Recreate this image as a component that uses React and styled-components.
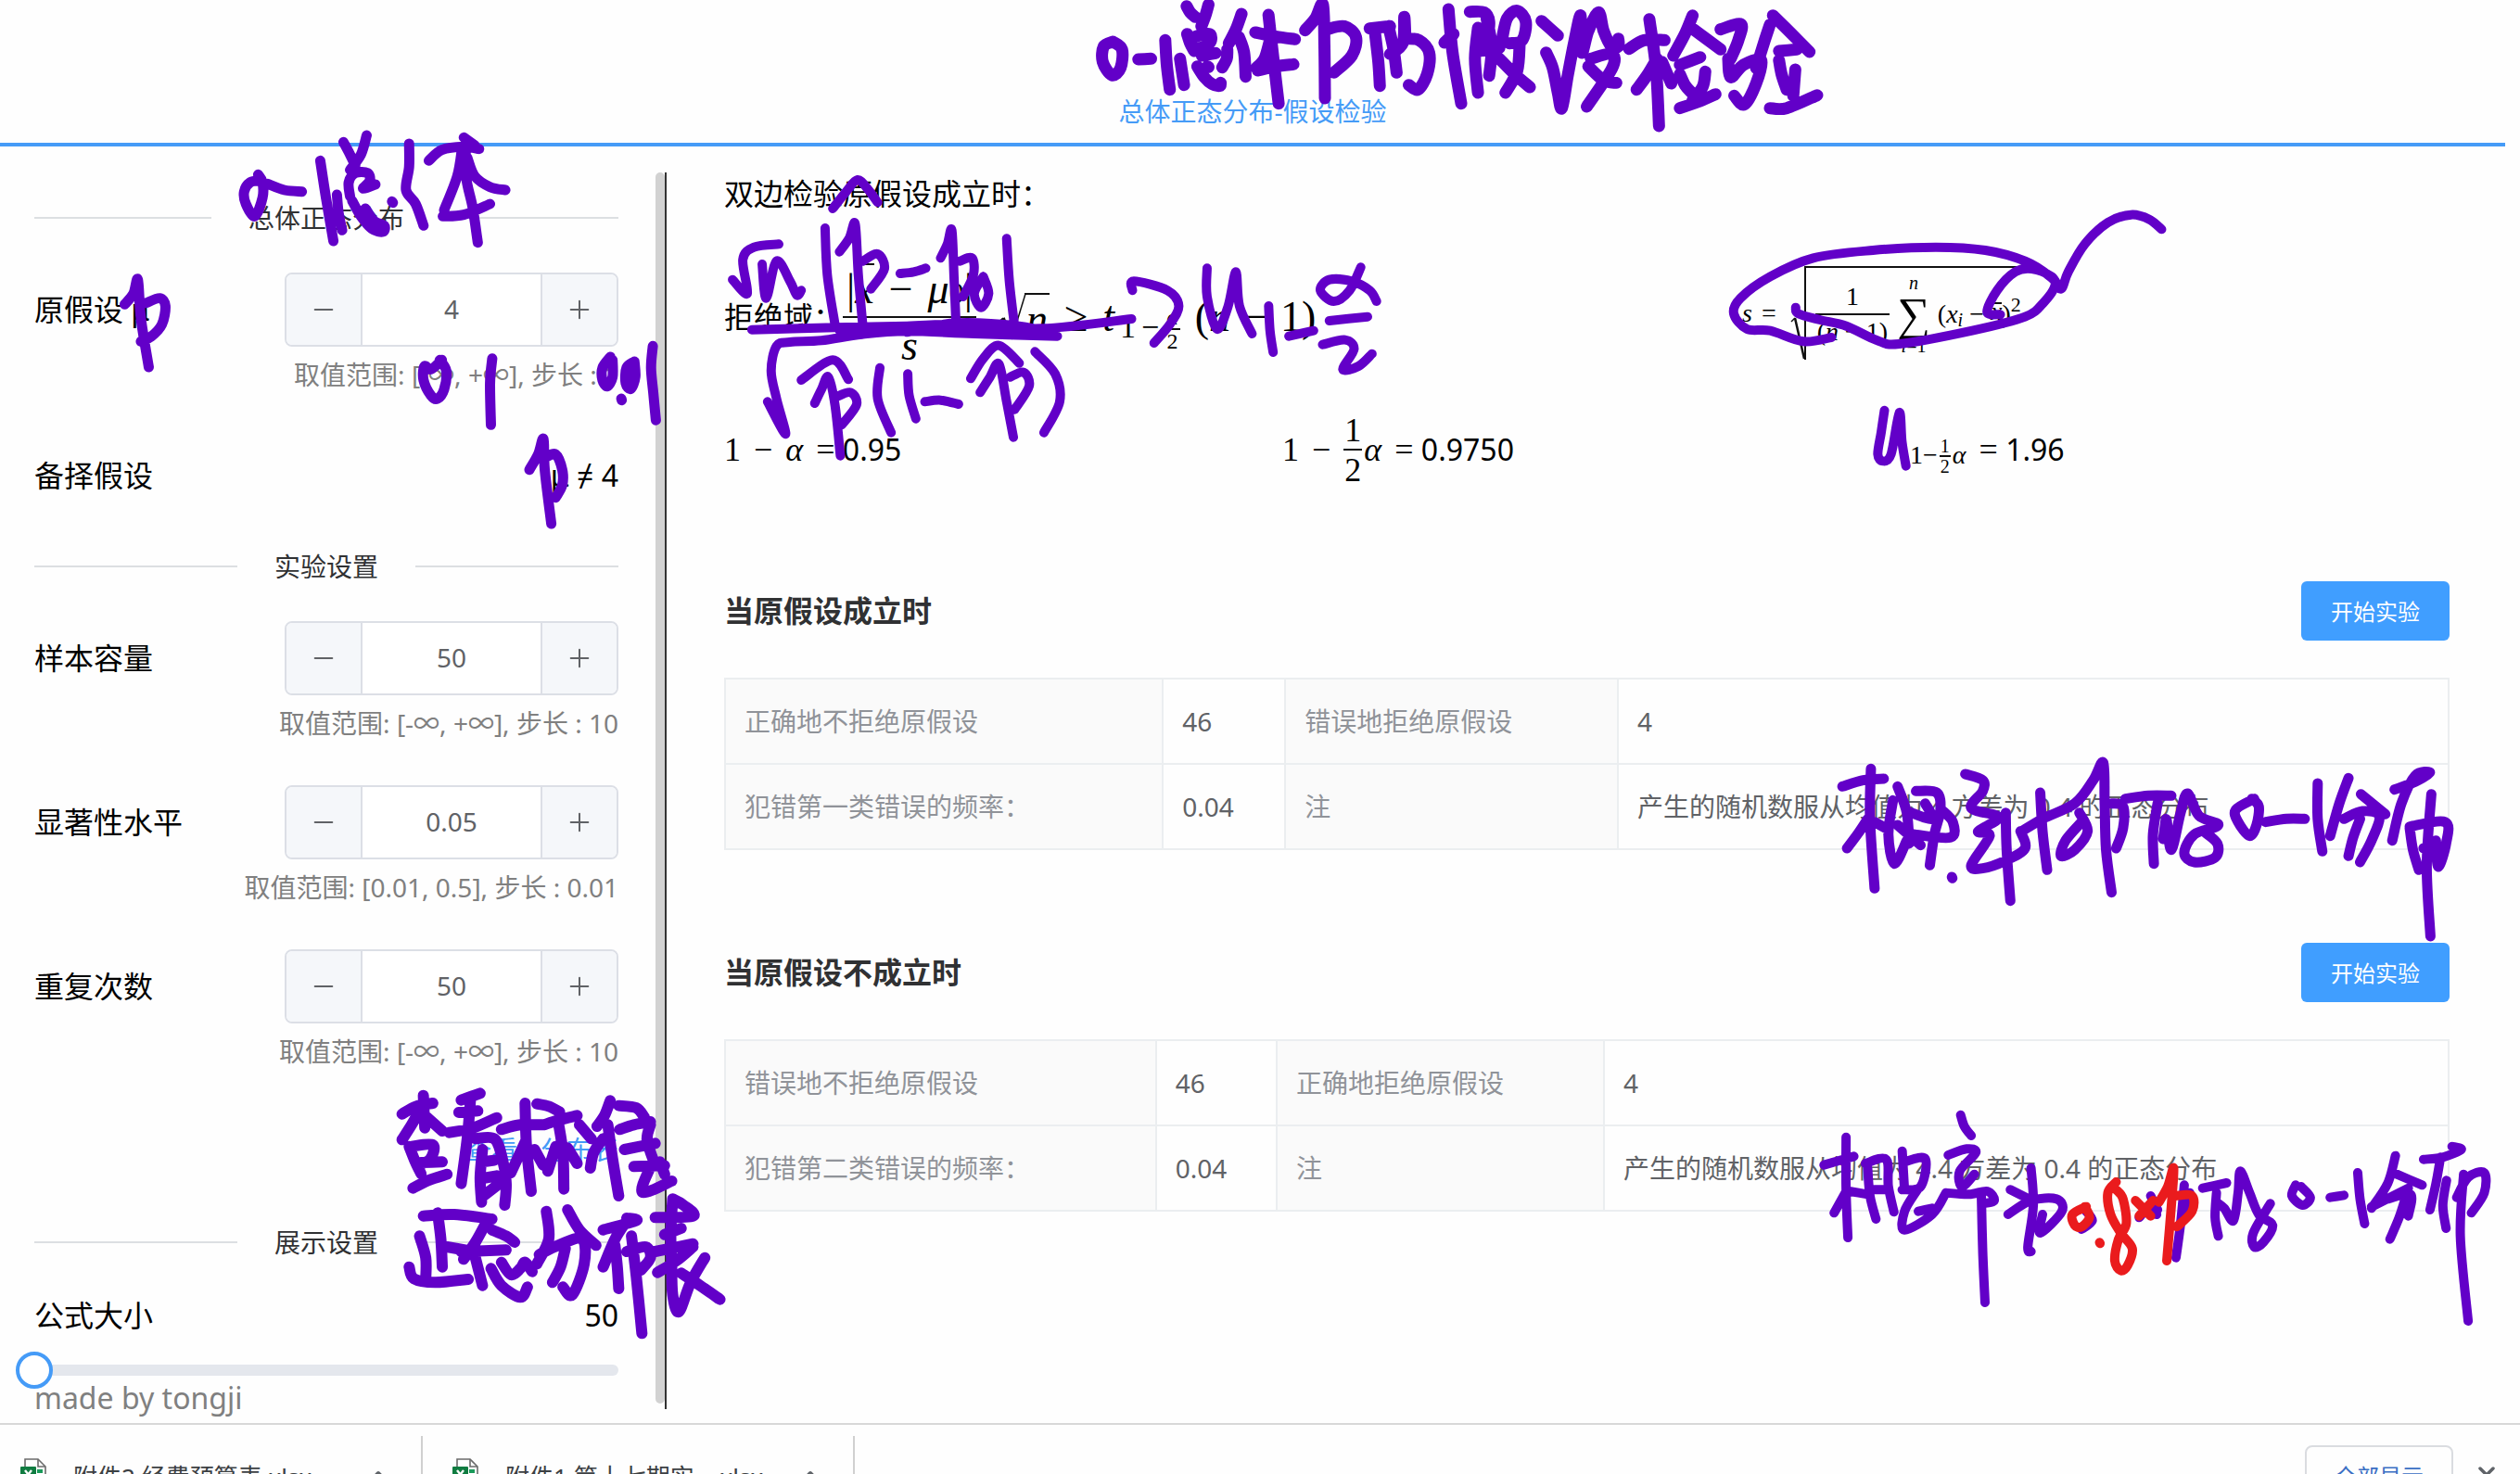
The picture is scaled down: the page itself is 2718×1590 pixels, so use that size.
import React, { useState } from "react";
import styled, { createGlobalStyle } from "styled-components";
import { Minus, Plus, ChevronUp, X } from "lucide-react";

const GlobalStyle = createGlobalStyle`
  * { box-sizing: border-box; }
  html, body { margin: 0; height: 100%; overflow: hidden; background: #fefefe; }
  body, button, input { font-family: "Noto Sans", "Noto Sans CJK SC", sans-serif; }
`;

const Shell = styled.div`
  position: relative;
  height: 100vh;
  overflow: hidden;
  color: #000;
  font-size: 32px;
  line-height: 40px;
`;

const Page = styled.div`
  margin-right: 16px;
`;

const Header = styled.header`
  display: flex;
  justify-content: center;
  padding: 100px 0 14px;
  border-bottom: 4px solid #459bf7;
  color: #459bf7;
  font-size: 28px;
`;

const PageTitle = styled.h1`
  margin: 0;
  font: inherit;
`;

const Body = styled.div`
  display: flex;
  align-items: flex-start;
  margin-top: 28px;
`;

/* ---------- settings column ---------- */

const Sidebar = styled.aside`
  display: flex;
  flex: none;
  gap: 40px;
  width: 719px;
  padding-left: 37px;
  border-right: 2px solid #333;
`;

const Settings = styled.form`
  flex: 1;
  display: flex;
  flex-direction: column;
  padding-top: 28px;
`;

const ScrollThumb = styled.div`
  width: 10px;
  margin-bottom: 6px;
  border-radius: 5px;
  background: #d2d2d2;
`;

const Divider = styled.h2`
  display: flex;
  align-items: center;
  gap: 40px;
  margin: 0 0 38px;
  font-size: 28px;
  line-height: 42px;
  font-weight: 400;
  color: #303133;
  &::before,
  &::after {
    content: "";
    flex: 1;
    height: 2px;
    background: #dcdfe2;
  }
`;

const Field = styled.div`
  display: flex;
  flex-direction: column;
  gap: 10px;
  margin-bottom: ${(p) => p.$after}px;
`;

const FieldRow = styled.div`
  display: flex;
  align-items: center;
  justify-content: space-between;
`;

const Stepper = styled.div`
  display: flex;
  width: 360px;
  height: 80px;
  overflow: hidden;
  border: 2px solid #dcdfe6;
  border-radius: 8px;
  background: #fff;
`;

const StepButton = styled.button`
  display: flex;
  align-items: center;
  justify-content: center;
  width: 80px;
  padding: 0;
  border: 0;
  background: #f5f7fa;
  color: #606266;
`;

const StepInput = styled.input`
  flex: 1;
  min-width: 0;
  padding: 0 0 2px;
  border: 0;
  border-left: 2px solid #dcdfe6;
  border-right: 2px solid #dcdfe6;
  background: #fff;
  color: #606266;
  font-size: 28px;
  text-align: center;
  outline: 0;
`;

const Hint = styled.div`
  font-size: 28px;
  color: #808080;
  text-align: right;
`;

const Summary = styled.div`
  display: flex;
  justify-content: space-between;
  margin-bottom: ${(p) => p.$after}px;
`;

const TableLink = styled.a`
  align-self: flex-end;
  margin-bottom: 59px;
  color: #459bf7;
  font-size: 28px;
  text-decoration: none;
`;

const SliderTrack = styled.div`
  display: flex;
  align-items: center;
  height: 12px;
  margin: 13px 0 12px;
  border-radius: 6px;
  background: #e4e7ed;
`;

const Slider = styled.input`
  appearance: none;
  flex: 1;
  height: 40px;
  margin: 0 -20px;
  background: transparent;
  &::-webkit-slider-thumb {
    appearance: none;
    width: 40px;
    height: 40px;
    border: 4px solid #459bf7;
    border-radius: 50%;
    background: #fff;
  }
`;

const Credit = styled.div`
  line-height: 24px;
  color: #808080;
`;

/* ---------- result column ---------- */

const Results = styled.main`
  flex: 1;
  min-width: 0;
  padding: 3px 60px 0 62px;
`;

const Lead = styled.p`
  margin: 0;
`;

const RuleRow = styled.div`
  display: grid;
  grid-template-columns: 1098fr 763fr;
  align-items: center;
  height: 120px;
  margin-top: 53px;
`;

const ValueRow = styled.div`
  display: grid;
  grid-template-columns: 602fr 677fr 582fr;
  align-items: center;
  height: 84px;
  margin-top: 41px;
`;

const Formula = styled.div`
  display: flex;
  align-items: center;
  white-space: nowrap;
  padding-bottom: ${(p) => p.$lift || 0}px;
`;

const MathText = styled.span`
  display: inline-flex;
  align-items: center;
  gap: ${(p) => p.$gap || 0}px;
  font-family: "Liberation Serif", serif;
  font-size: ${(p) => p.$size || 36}px;
  line-height: 1;
`;

const Fraction = styled.span`
  display: inline-grid;
  grid-template-rows: 1fr 2px 1fr;
  justify-items: center;
  align-items: center;
  height: ${(p) => p.$height}px;
  padding: 0 ${(p) => p.$pad || 0}px;
  &::before {
    content: "";
    grid-row: 2;
    grid-column: 1;
    justify-self: stretch;
    height: 2px;
    margin: 0 -${(p) => p.$pad || 0}px;
    background: #111;
  }
`;

const Over = styled.span`
  grid-row: 1;
  grid-column: 1;
  display: inline-flex;
  align-items: center;
`;

const Under = styled.span`
  grid-row: 3;
  grid-column: 1;
`;

const Bar = styled.i`
  border-top: 2px solid #111;
  line-height: 0.6;
  padding-bottom: 8px;
`;

const Lower = styled.span`
  display: inline-flex;
  align-items: center;
  gap: ${(p) => p.$gap || 2}px;
  padding-top: ${(p) => p.$drop}px;
  font-size: ${(p) => p.$size}px;
`;

const Raise = styled.span`
  padding-bottom: 20px;
  font-size: 22px;
`;

const Radical = styled.svg`
  flex: none;
  margin-right: -2px;
`;

const Radicand = styled.span`
  display: inline-flex;
  align-items: center;
  height: ${(p) => p.$height}px;
  padding: ${(p) => p.$pad || "0"};
  border-top: 2px solid #111;
`;

const SumStack = styled.span`
  display: inline-flex;
  flex-direction: column;
  align-items: center;
  font-size: 20px;
`;

const Sigma = styled.span`
  font-size: 50px;
  line-height: 48px;
`;

const Section = styled.section`
  margin-top: 100px;
`;

const SectionHead = styled.div`
  display: flex;
  align-items: center;
  justify-content: space-between;
  margin-bottom: 40px;
`;

const SectionTitle = styled.h2`
  margin: 0;
  font-size: 32px;
  font-weight: 700;
  color: #303133;
`;

const RunButton = styled.button`
  width: 160px;
  height: 64px;
  padding: 0 0 2px;
  border: 0;
  border-radius: 6px;
  background: #409eff;
  color: #fff;
  font-size: 24px;
`;

const DataTable = styled.table`
  width: 100%;
  table-layout: fixed;
  border-collapse: collapse;
  font-size: 28px;
  th,
  td {
    height: 92px;
    padding: 0 20px;
    border: 2px solid #ebeef0;
    font-weight: 400;
    text-align: left;
    white-space: nowrap;
  }
  th {
    background: #fafafa;
    color: #909399;
  }
  td {
    color: #606266;
  }
`;

const Column = styled.col`
  width: ${(p) => p.$width};
`;

/* ---------- downloads ---------- */

const Downloads = styled.footer`
  display: flex;
  align-items: flex-start;
  margin-top: 15px;
  padding-top: 12px;
  border-top: 2px solid #d8d8d8;
  font-size: 26px;
`;

const DownloadItem = styled.div`
  display: flex;
  align-items: flex-start;
  width: ${(p) => p.$width}px;
  height: 88px;
  padding: 24px 32px 0 ${(p) => p.$inset}px;
  border-right: 2px solid #d0d0d0;
  color: #3c4043;
`;

const FileName = styled.span`
  flex: 1;
  margin-left: 29px;
  white-space: nowrap;
`;

const IconButton = styled.button`
  display: flex;
  padding: 0;
  border: 0;
  background: transparent;
  color: #5f6368;
  margin-top: 6px;
`;

const DownloadActions = styled.div`
  display: flex;
  gap: 22px;
  margin-left: auto;
  padding: 10px 22px 0 0;
`;

const ShowAll = styled.button`
  width: 160px;
  height: 68px;
  padding: 0 0 4px;
  border: 2px solid #dadce0;
  border-radius: 8px;
  background: transparent;
  color: #3a6fc4;
  font-size: 24px;
`;

const CloseButton = styled(IconButton)`
  margin-top: 18px;
`;

/* ---------- pen notes ---------- */

const Ink = styled.svg`
  position: absolute;
  inset: 0;
  width: 100%;
  height: 100%;
  pointer-events: none;
  fill: none;
  stroke: #6200c8;
  stroke-linecap: round;
  stroke-linejoin: round;
`;

// Each note: origin, units per pixel on both axes, pen width, and its strokes.
const NOTES = [
  {
    x: 1140, y: 0, sx: 1.8233, sy: 3, pen: 13,
    strokes: `110,135 92,150 90,200 108,243 125,220 128,160 110,135|160,192 185,190|213,130 216,210 222,290
255,20 262,40 272,55|298,15 292,50 284,85|242,190 250,275|256,110 262,140 270,165|262,125 285,112 302,112 300,140 275,160|285,180 312,172|276,215 290,250 305,272 320,278 322,268|296,215 298,217|335,160 334,190 325,218
363,45 352,95 338,140|358,120 368,170 371,248|390,105 430,118 468,127|416,48 425,180 436,335|418,135 408,190 392,220|395,228 430,215 465,208
488,98 508,60 523,15 526,150 527,318|530,95 565,85 588,120 580,180 545,235
615,92 655,85|625,100 632,200 635,278|652,85 662,160 668,235|655,175 680,140 683,55 685,110|685,125 712,130 732,170 728,240 710,290 692,275
770,30 778,170 795,335|762,138 780,110|812,38 840,40 850,70 845,120 830,125|828,90 822,190 828,300|845,60 855,150 850,245|830,165 870,155|875,130 885,60 905,35 922,70 915,130 890,140|870,190 900,240 930,282|910,140 905,230 882,300
953,68 985,115|962,170 975,220 985,300 993,350 1005,240 1018,130 1030,50 1032,170 1045,100 1065,40 1075,100 1090,150 1104,150 1104,125|1050,190 1090,175 1092,220 1042,345|1045,215 1075,260 1100,268
1125,158 1155,130 1195,130|1165,62 1178,220 1184,408|1180,190 1160,245 1140,290|1190,200 1208,270|1250,50 1235,110 1212,180|1252,95 1305,160|1225,210 1265,185|1225,240 1235,275 1248,300|1275,232 1270,280 1250,325|1225,350 1260,330 1295,305
1305,95 1345,78 1340,130 1325,190|1320,190 1325,250 1350,210 1385,195 1375,270 1352,338 1332,310|1402,80 1390,140 1375,220|1408,50 1445,110 1480,168|1420,165 1455,160|1420,195 1425,240 1435,290|1452,225 1448,310|1402,350 1435,350 1495,308`,
  },
  {
    x: 0, y: 130, sx: 2.119, sy: 3, pen: 11,
    strokes: `590,175 600,200 600,250 582,310 562,270 558,230 572,200 595,195|612,205 650,225 690,230|732,130 745,250 762,390
785,70 800,110 812,145|838,48 825,110 800,160|770,240 774,300 782,355|800,245 797,200 812,170 840,170 845,195 830,220 858,207|805,260 825,310 850,350 875,360 878,340 855,325 835,285|896,262 898,266
935,75 935,150 928,225 950,270 968,340|980,130 1010,95 1060,85 1095,92|1060,55 1085,80|1065,65 1065,180 1080,280 1092,395|1056,90 1045,180 1015,290|1068,120 1085,180 1120,215 1155,225|1012,310 1060,305 1120,270
285,595 305,560 315,515 322,640 340,798|335,590 365,575 378,600 370,660 345,700 322,715
1010,775 985,805 970,795 968,840 985,890 1000,900 1015,870 1020,810 1005,775|1125,770 1120,850 1122,985
1395,765 1377,800 1377,840 1388,860 1400,830 1400,775|1420,900 1421,905|1450,780 1432,800 1430,850 1442,868 1452,830 1450,780|1492,730 1488,800 1493,880 1499,970
1210,1130 1230,1080 1242,1030 1245,1130 1260,1305|1248,1090 1270,1080 1285,1130 1285,1180 1270,1220`,
  },
  {
    x: 0, y: 1150, sx: 1.96, sy: 3, pen: 12,
    strokes: `850,155 880,130 915,120|895,95 898,200|885,150 870,190 850,238|902,165 935,210|865,260 878,310 890,348|870,260 915,255 910,300 885,320|890,312 935,310|873,395 905,370 945,350
975,110 1015,88|970,150 1010,145|950,215 1000,200 1050,167|995,100 988,230 975,380|1005,235 1045,235 1062,300 1070,380 1067,450|1020,270 1015,360 1018,440|1018,310 1045,305|1015,365 1050,355|1022,420 1060,375
1060,205 1100,190 1150,190|1110,120 1113,260 1123,405|1112,240 1080,345|1130,270 1148,320|1175,260 1158,340|1135,122 1160,130 1183,148|1150,190 1180,175 1220,160|1180,180 1190,280 1192,398|1200,265 1220,315
1225,190 1250,235|1248,330 1255,280 1275,235|1290,112 1278,160 1262,195|1285,190 1295,300 1308,420|1308,128 1345,135 1362,165|1310,205 1340,190 1375,180|1375,190 1368,240 1385,320|1320,270 1385,250|1340,325 1405,322|1375,325 1358,408 1420,372|1395,310 1405,350
895,485 960,480 1040,495|925,475 932,560 935,650|887,550 900,620 900,690|865,650 875,688 920,700 990,690|945,585 1000,600
1030,500 1005,570 980,625|1000,590 1010,650 1020,710|1040,530 1070,550 1088,570|975,600 1070,595|1038,655 1060,710 1100,748 1115,715|1060,635 1080,675 1100,655 1110,635 1125,665
1155,470 1160,560 1135,640|1200,465 1225,530 1260,580|1140,610 1180,580 1230,560 1235,640 1210,740 1190,715|1195,590 1185,650 1168,700
1275,530 1345,500 1325,492|1325,500 1300,560 1275,650|1300,580 1305,650 1308,720|1335,550 1345,680 1357,865|1325,600 1365,585 1375,620 1355,660
1385,490 1465,485 1445,450 1422,430|1422,430 1418,540 1420,640|1405,545 1440,525|1385,600 1465,575|1465,585 1430,630 1390,668|1420,640 1422,740 1435,795 1460,700 1490,620|1440,670 1480,710 1522,755`,
  },
  {
    x: 760, y: 170, sx: 2.063, sy: 3, pen: 10,
    strokes: `285,165 315,110 340,72 362,100 385,145|62,395 95,440 85,330 110,290 165,280|128,345 137,455 160,335 190,400 205,445 215,430
268,228 273,380 290,540|300,305 322,260 335,215 342,380 352,545|352,335 385,312 400,360 370,425|435,375 465,370 492,358
525,325 540,280 550,235 555,390 560,560|568,335 595,325 598,380 575,450|620,385 600,440 615,485 632,440 620,385|672,262 678,400 690,550
105,557 290,550 450,545 560,540 750,553 950,522|300,560 450,552 560,548 700,562|450,565 560,535 700,545 780,570
140,790 180,895 160,780 148,690 160,610 190,597 260,592 350,572 450,562 600,570 785,578
215,720 285,655 320,718|245,795 260,750 275,710 290,800 302,965|292,775 325,760 338,800 305,865|390,680 385,780 415,890|452,700 455,770 470,845|490,790 525,785 565,798
592,715 620,650 655,608 700,665|613,760 635,710 655,668 672,790 687,905|680,710 710,695 722,740 690,815|735,628 780,700 790,790 755,890
952,430 955,400 1030,430 1055,480 1035,540 1000,600|1118,358 1118,450 1140,555 1165,480 1182,370 1190,480 1218,570|1255,480 1258,560 1265,630|1300,578 1355,560
1460,355 1435,430 1400,465 1370,430 1390,395 1440,400 1480,430 1495,465|1390,528 1475,515|1375,605 1425,590 1445,620 1420,685 1455,675 1485,635`,
  },
  {
    x: 1820, y: 210, sx: 2.8, sy: 3, pen: 10,
    strokes: `435,462 350,475 250,440 180,435 140,385 160,335 250,265 380,205 560,180 750,170 900,180 1020,215 1095,265 1110,295 1075,350 1020,395 860,440 640,483 570,470 480,425 400,405 335,385 327,365
945,388 905,380 935,310 990,250 1040,240 1100,265 1128,305 1150,250 1200,160 1270,90 1340,65 1395,80 1432,112
595,698 585,770 575,840 590,862 615,840 640,705 648,800 660,878`,
  },
  {
    x: 1940, y: 600, sx: 2.015, sy: 3, pen: 11,
    strokes: `95,745 140,725 185,720|157,688 155,850 165,1075|150,850 130,895 105,945|165,860 195,885|205,790 195,900 208,995 235,920|215,745 235,830 240,930|255,760 300,765 308,820 295,900 285,1000|245,830 290,850 275,800|250,900 330,910 335,860 310,820|215,870 265,935|333,1038 334,1042
362,705 400,725 400,760 375,815 435,845 390,890 415,905 375,1000 400,1010 450,985 492,945 482,890|450,830 452,950 460,1115
485,890 530,850 600,800 640,725 662,668 665,800 668,950 680,1088|525,765 530,890 540,1015|610,830 628,890 600,950 570,970 580,920 615,860|680,800 705,810 705,880 690,945
710,785 760,775 810,775|780,800 770,900 772,995|798,850 792,915|800,855 810,950 830,830 845,768 870,840 912,870 860,900 838,960 860,990 905,975 910,930 880,890
990,785 950,820 955,860 980,905 995,870 1000,810 985,785|1015,860 1060,850 1100,850|1128,735 1128,850 1138,955
1195,718 1175,800 1155,905|1222,770 1275,835|1185,850 1225,825 1262,840 1245,920 1220,990|1220,850 1205,910 1195,970
1295,755 1340,730 1372,700 1340,710 1310,800 1290,920|1328,880 1335,950 1348,1015|1328,875 1405,860 1407,930 1390,1005 1385,920|1375,770 1365,1000 1373,1230|1358,945 1400,965`,
  },
  {
    x: 1940, y: 1000, sx: 2.015, sy: 3, pen: 10,
    strokes: `55,770 120,742|103,680 103,850 107,1005|105,850 77,925|110,855 150,865|150,780 155,870 168,945|145,765 190,752 195,840 207,922|165,850 195,850|225,725 230,850|230,760 275,750 265,840 225,850|258,850 230,920 230,980 290,930 320,860|260,920 290,910
352,608 360,645 375,675|325,738 365,718 385,730 350,790 355,840 382,800|320,860 370,865 410,855 425,885 400,895|397,870 400,1050 405,1215
460,850 500,880|505,780 510,900 498,1035 505,1050|455,930 505,885 560,880 572,920 525,990 530,930|625,920 638,950 615,978|740,940 755,920 778,930|765,870 780,915|838,835 830,960 820,1070|850,860 845,930
878,845 930,828|908,860 905,940 912,1000|908,890 925,910 945,950 955,860 960,790 980,860 1000,930 1030,965 1010,1020 990,1035 988,990 1025,895
1080,835 1072,870 1095,900 1112,875 1092,840|1155,875 1185,868|1215,795 1220,880 1230,960
1297,740 1280,830 1245,910|1245,905 1325,845|1300,800 1355,835|1280,880 1330,865 1325,935|1320,870 1305,940 1285,1010
1358,752 1400,745 1440,720 1420,710|1395,745 1385,830 1372,915|1408,820 1400,900 1407,975|1445,800 1438,1000 1455,1275|1430,875 1455,810 1490,795 1490,860 1462,925`,
  },
  {
    x: 1940, y: 1000, sx: 2.015, sy: 3, pen: 10, color: "#ea1b1d",
    strokes: `625,905 595,930 600,965 615,970 632,940 622,905|654,1021 655,1024|690,825 672,860 678,930 700,990 725,1040 715,1095 700,1112 687,1080 695,1010 712,960 705,880 690,850|732,885 765,935|770,885 740,935
783,890 802,840 815,780 810,900 800,1080|820,870 855,870 855,920 822,970`,
  },
];

// Smooth curve through the points of one stroke.
function strokePath(stroke, note) {
  const pts = stroke.trim().split(/\s+/).map((pair) => {
    const [px, py] = pair.split(",").map(Number);
    return [note.x + px / note.sx, note.y + py / note.sy];
  });
  let d = `M${pts[0]}`;
  for (let i = 0; i < pts.length - 1; i += 1) {
    const a = pts[i - 1] || pts[i];
    const b = pts[i];
    const c = pts[i + 1];
    const e = pts[i + 2] || c;
    d += `C${b[0] + (c[0] - a[0]) / 6},${b[1] + (c[1] - a[1]) / 6} ${c[0] - (e[0] - b[0]) / 6},${c[1] - (e[1] - b[1]) / 6} ${c}`;
  }
  return d;
}

function PenNotes() {
  return (
    <Ink viewBox="0 0 2718 1590" preserveAspectRatio="xMinYMin meet" aria-hidden="true">
      {NOTES.map((note, n) => (
        <path
          key={n}
          strokeWidth={note.pen}
          stroke={note.color}
          d={note.strokes.split(/[|\n]/).map((s) => strokePath(s, note)).join("")}
        />
      ))}
    </Ink>
  );
}

function NumberField({ id, label, start, step, hint, after = 47 }) {
  const [value, setValue] = useState(start);
  const move = (by) => setValue((v) => String(Number((Number(v) + by).toFixed(2))));
  return (
    <Field $after={after}>
      <FieldRow>
        <label htmlFor={id}>{label}</label>
        <Stepper>
          <StepButton type="button" aria-label="减少" onClick={() => move(-step)}>
            <Minus size={32} strokeWidth={1.5} />
          </StepButton>
          <StepInput id={id} value={value} onChange={(e) => setValue(e.target.value)} />
          <StepButton type="button" aria-label="增加" onClick={() => move(step)}>
            <Plus size={32} strokeWidth={1.5} />
          </StepButton>
        </Stepper>
      </FieldRow>
      <Hint>{hint}</Hint>
    </Field>
  );
}

function Half({ top, height, pad = 1 }) {
  return (
    <Fraction $height={height} $pad={pad}>
      <Over>{top}</Over>
      <Under>2</Under>
    </Fraction>
  );
}

function ResultSection({ title, columns, rows }) {
  return (
    <Section>
      <SectionHead>
        <SectionTitle>{title}</SectionTitle>
        <RunButton type="button">开始实验</RunButton>
      </SectionHead>
      <DataTable>
        <colgroup>
          {columns.map((w, i) => (
            <Column key={i} $width={w} />
          ))}
        </colgroup>
        <tbody>
          {rows.map((row) => (
            <tr key={row[0]}>
              <th scope="row">{row[0]}</th>
              <td>{row[1]}</td>
              <th scope="row">{row[2]}</th>
              <td>{row[3]}</td>
            </tr>
          ))}
        </tbody>
      </DataTable>
    </Section>
  );
}

function SheetIcon() {
  return (
    <svg width="28" height="34" viewBox="0 0 28 34" fill="none" aria-hidden="true">
      <path d="M5 1h14l8 8v24H5z" fill="#fff" stroke="#6b6b6b" strokeWidth="1.6" />
      <path d="M19 1v8h8" stroke="#6b6b6b" strokeWidth="1.6" />
      <path d="M18 12h6v4h-6zM18 18h6v4h-6z" fill="#1a9a5a" />
      <rect x="0" y="9" width="17" height="17" rx="1" fill="#107c41" />
      <path d="M5 13l7 9M12 13l-7 9" stroke="#fff" strokeWidth="2.4" />
    </svg>
  );
}

function Download({ name, width, inset }) {
  return (
    <DownloadItem $width={width} $inset={inset}>
      <SheetIcon />
      <FileName>{name}</FileName>
      <IconButton type="button" aria-label="更多">
        <ChevronUp size={28} strokeWidth={4} />
      </IconButton>
    </DownloadItem>
  );
}

export default function App() {
  const [size, setSize] = useState(50);
  return (
    <Shell>
      <GlobalStyle />
      <Page>
        <Header>
          <PageTitle>总体正态分布-假设检验</PageTitle>
        </Header>
        <Body>
          <Sidebar>
            <Settings>
              <Divider>总体正态分布</Divider>
              <NumberField id="mean" label="原假设 μ" start="4" step={1} hint="取值范围: [-∞, +∞], 步长 : 1" after={69} />
              <Summary $after={57}>
                <span>备择假设</span>
                <span>μ ≠ 4</span>
              </Summary>
              <Divider>实验设置</Divider>
              <NumberField id="sample" label="样本容量" start="50" step={10} hint="取值范围: [-∞, +∞], 步长 : 10" />
              <NumberField id="level" label="显著性水平" start="0.05" step={0.01} hint="取值范围: [0.01, 0.5], 步长 : 0.01" />
              <NumberField id="repeat" label="重复次数" start="50" step={10} hint="取值范围: [-∞, +∞], 步长 : 10" after={66} />
              <TableLink href="#t">查看 t 分布表</TableLink>
              <Divider>展示设置</Divider>
              <Summary $after={20}>
                <label htmlFor="size">公式大小</label>
                <span>{size}</span>
              </Summary>
              <SliderTrack>
                <Slider id="size" type="range" min="50" max="100" value={size} onChange={(e) => setSize(Number(e.target.value))} />
              </SliderTrack>
              <Credit>made by tongji</Credit>
            </Settings>
            <ScrollThumb />
          </Sidebar>

          <Results>
            <Lead>双边检验原假设成立时：</Lead>
            <RuleRow>
              <Formula>
                <span>拒绝域：</span>
                <MathText $size={46} $gap={16}>
                  <Fraction $height={120} $pad={4}>
                    <Over>
                      <MathText $size={46} $gap={16}>
                        <span>|<Bar>x</Bar></span>
                        <span>−</span>
                        <span><i>μ</i><Lower $size={32} $drop={0}>0</Lower>|</span>
                      </MathText>
                    </Over>
                    <Under><i>s</i></Under>
                  </Fraction>
                  <MathText $size={46} $gap={16}>
                    <MathText $size={46}>
                      <Radical width="38" height="52" viewBox="0 0 38 52" fill="none" stroke="#111">
                        <path d="M7 32l6-5" strokeWidth="1.5" />
                        <path d="M13 27l9 22" strokeWidth="3.5" />
                        <path d="M22 50L37 1" strokeWidth="1.5" />
                      </Radical>
                      <Radicand $height={52} $pad="4px 2px 0"><i>n</i></Radicand>
                    </MathText>
                    <span>≥</span>
                    <MathText $size={46} $gap={6}>
                      <i>t</i>
                      <Lower $size={34} $drop={22} $gap={6}>
                        <span>1</span>
                        <span>−</span>
                        <MathText $size={24}>
                          <Half top={<i>α</i>} height={46} pad={2} />
                        </MathText>
                      </Lower>
                    </MathText>
                    <MathText $size={46} $gap={14}>
                      <span>(<i>n</i></span>
                      <span>−</span>
                      <span>1)</span>
                    </MathText>
                  </MathText>
                </MathText>
              </Formula>
              <Formula $lift={8}>
                <MathText $size={28} $gap={10}>
                  <i>s</i>
                  <span>=</span>
                  <MathText $size={28}>
                    <Radical width="22" height="102" viewBox="0 0 22 102" fill="none" stroke="#111">
                      <path d="M6 60l4-4" strokeWidth="1.5" />
                      <path d="M10 56l10 44" strokeWidth="2.5" />
                      <path d="M21 101V0" strokeWidth="2" />
                    </Radical>
                    <Radicand $height={102} $pad="0 4px 0 12px">
                      <MathText $size={28} $gap={8}>
                        <Fraction $height={74} $pad={2}>
                          <Over>1</Over>
                          <Under>(<i>n</i> − 1)</Under>
                        </Fraction>
                        <SumStack>
                          <i>n</i>
                          <Sigma>∑</Sigma>
                          <span><i>i</i>=1</span>
                        </SumStack>
                        <MathText $size={28}>
                          (<i>x</i>
                          <Lower $size={20} $drop={12}><i>i</i></Lower>
                          &nbsp;−&nbsp;
                          <Bar>x</Bar>)<Raise>2</Raise>
                        </MathText>
                      </MathText>
                    </Radicand>
                  </MathText>
                </MathText>
              </Formula>
            </RuleRow>
            <ValueRow>
              <Formula>
                <MathText $gap={14}>
                  <span>1</span>
                  <span>−</span>
                  <i>α</i>
                  <span>=</span>
                </MathText>
                <span>&nbsp;0.95</span>
              </Formula>
              <Formula>
                <MathText $gap={14}>
                  <span>1</span>
                  <span>−</span>
                  <span>
                    <MathText $gap={2}>
                      <Half top="1" height={84} />
                      <i>α</i>
                    </MathText>
                  </span>
                  <span>=</span>
                </MathText>
                <span>&nbsp;0.9750</span>
              </Formula>
              <Formula>
                <MathText $gap={14}>
                  <Lower $size={28} $drop={12}>
                    1−
                    <MathText $size={20}>
                      <Half top="1" height={40} />
                    </MathText>
                    <i>α</i>
                  </Lower>
                  <span>=</span>
                </MathText>
                <span>&nbsp;1.96</span>
              </Formula>
            </ValueRow>
            <ResultSection
              title="当原假设成立时"
              columns={["25.4%", "7.1%", "19.3%", "48.2%"]}
              rows={[
                ["正确地不拒绝原假设", "46", "错误地拒绝原假设", "4"],
                ["犯错第一类错误的频率：", "0.04", "注", "产生的随机数服从均值为 4 方差为 0.4 的正态分布"],
              ]}
            />
            <ResultSection
              title="当原假设不成立时"
              columns={["25%", "7%", "19%", "49%"]}
              rows={[
                ["错误地不拒绝原假设", "46", "正确地拒绝原假设", "4"],
                ["犯错第二类错误的频率：", "0.04", "注", "产生的随机数服从均值为 4.4 方差为 0.4 的正态分布"],
              ]}
            />
          </Results>
        </Body>
      </Page>
      <Downloads>
        <Download name="附件2 经费预算表.xlsx" width={456} inset={22} />
        <Download name="附件1 第十七期实....xlsx" width={466} inset={32} />
        <DownloadActions>
          <ShowAll type="button">全部显示</ShowAll>
          <CloseButton type="button" aria-label="关闭">
            <X size={28} strokeWidth={3} />
          </CloseButton>
        </DownloadActions>
      </Downloads>
      <PenNotes />
    </Shell>
  );
}
